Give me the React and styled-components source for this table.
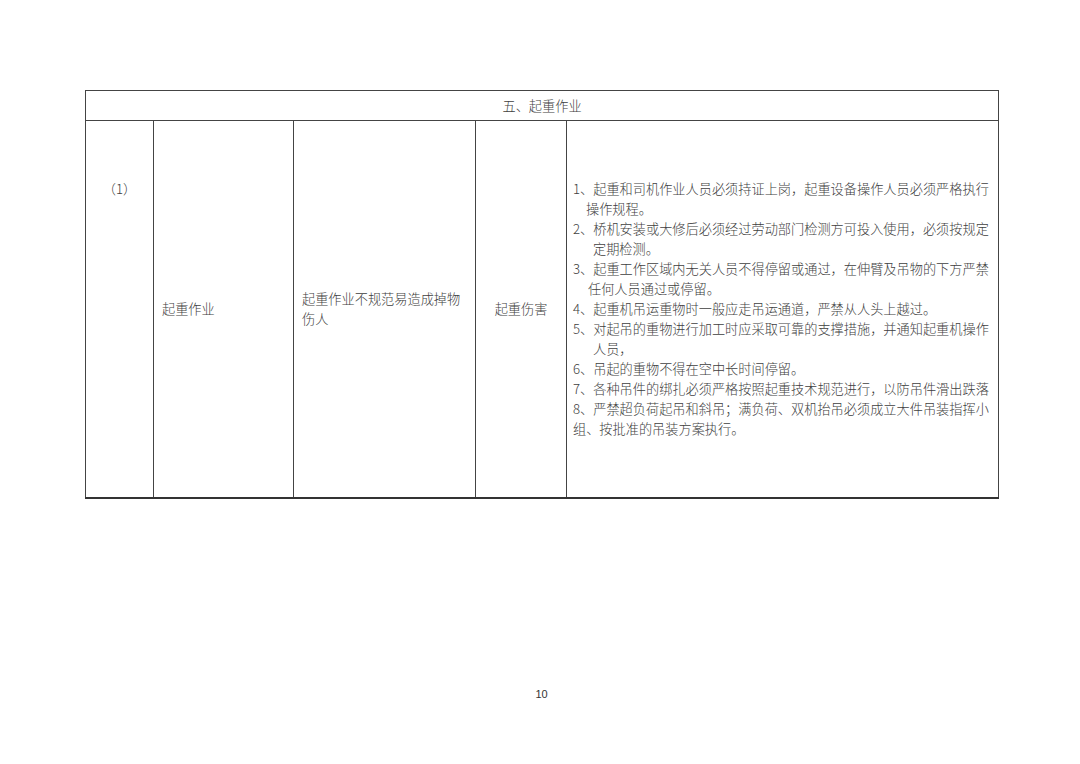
import React from "react";
import styled, { createGlobalStyle } from "styled-components";

const GlobalStyle = createGlobalStyle`
  html, body {
    margin: 0;
    padding: 0;
    background: #ffffff;
  }
  body {
    font-family: "Noto Sans CJK SC", "Liberation Serif", sans-serif;
    color: #404040;
  }
`;

const Page = styled.div`
  width: 1080px;
  height: 764px;
  background: #ffffff;
  display: flex;
  flex-direction: column;
  align-items: flex-start;
  padding: 90px 0 0 85px;
  box-sizing: border-box;
`;

const Table = styled.table`
  width: 913px;
  border-collapse: collapse;
  table-layout: fixed;
  font-size: 13.2px;
  font-weight: 300;
  line-height: 20px;
`;

const HeadCell = styled.td`
  height: 29px;
  border: 1px solid #444;
  text-align: center;
  vertical-align: middle;
  padding: 0;
`;

const Cell = styled.td`
  height: 377px;
  border: 1px solid #444;
  border-bottom: 2px solid #333;
  padding: ${(p) => p.$pad || "0 8px"};
  text-align: ${(p) => p.$align || "left"};
  vertical-align: ${(p) => p.$valign || "middle"};
  box-sizing: border-box;
`;

const Line = styled.div`
  padding-left: ${(p) => p.$indent || 0}px;
  white-space: nowrap;
`;

const PageNo = styled.div`
  width: 913px;
  margin-top: 189px;
  text-align: center;
  font-family: "Liberation Sans", sans-serif;
  font-size: 11px;
  color: #333;
`;

const measures = [
  { t: "1、起重和司机作业人员必须持证上岗，起重设备操作人员必须严格执行" },
  { t: "操作规程。", i: 13 },
  { t: "2、桥机安装或大修后必须经过劳动部门检测方可投入使用，必须按规定" },
  { t: "定期检测。", i: 20 },
  { t: "3、起重工作区域内无关人员不得停留或通过，在伸臂及吊物的下方严禁" },
  { t: "任何人员通过或停留。", i: 15 },
  { t: "4、起重机吊运重物时一般应走吊运通道，严禁从人头上越过。" },
  { t: "5、对起吊的重物进行加工时应采取可靠的支撑措施，并通知起重机操作" },
  { t: "人员，", i: 20 },
  { t: "6、吊起的重物不得在空中长时间停留。" },
  { t: "7、各种吊件的绑扎必须严格按照起重技术规范进行，以防吊件滑出跌落" },
  { t: "8、严禁超负荷起吊和斜吊；满负荷、双机抬吊必须成立大件吊装指挥小" },
  { t: "组、按批准的吊装方案执行。" },
];

export default function App() {
  return (
    <Page>
      <GlobalStyle />
      <Table>
        <colgroup>
          <col style={{ width: 68 }} />
          <col style={{ width: 140 }} />
          <col style={{ width: 182 }} />
          <col style={{ width: 91 }} />
          <col style={{ width: 432 }} />
        </colgroup>
        <tbody>
          <tr>
            <HeadCell colSpan={5}>五、起重作业</HeadCell>
          </tr>
          <tr>
            <Cell $align="center" $valign="top" $pad="58px 0 0">
              （1）
            </Cell>
            <Cell>起重作业</Cell>
            <Cell>
              起重作业不规范易造成掉物
              <br />
              伤人
            </Cell>
            <Cell $align="center" $pad="0">
              起重伤害
            </Cell>
            <Cell $pad="0 0 0 6px">
              {measures.map((m, idx) => (
                <Line key={idx} $indent={m.i}>
                  {m.t}
                </Line>
              ))}
            </Cell>
          </tr>
        </tbody>
      </Table>
      <PageNo>10</PageNo>
    </Page>
  );
}
